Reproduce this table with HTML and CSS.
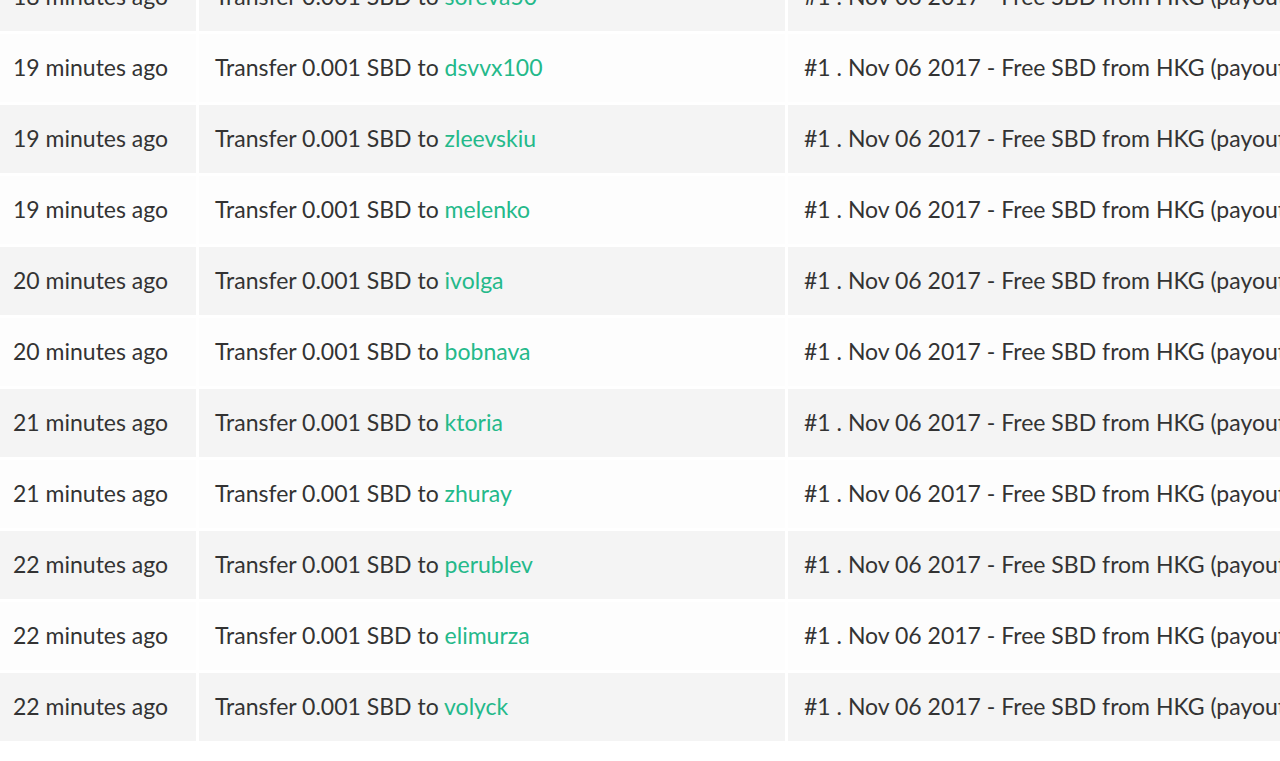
FILE: index.html
```html
<!DOCTYPE html>
<html lang="en">
<head>
<meta charset="utf-8">
<title>Transfers</title>
<link rel="stylesheet" href="styles.css">
</head>
<body>
<table class="history">
  <tbody>
    <tr><td class="time">18 minutes ago</td><td class="op">Transfer 0.001 SBD to <a href="#">soreva50</a></td><td class="memo">#1 . Nov 06 2017 - Free SBD from HKG (payout)</td></tr>
    <tr><td class="time">19 minutes ago</td><td class="op">Transfer 0.001 SBD to <a href="#">dsvvx100</a></td><td class="memo">#1 . Nov 06 2017 - Free SBD from HKG (payout)</td></tr>
    <tr><td class="time">19 minutes ago</td><td class="op">Transfer 0.001 SBD to <a href="#">zleevskiu</a></td><td class="memo">#1 . Nov 06 2017 - Free SBD from HKG (payout)</td></tr>
    <tr><td class="time">19 minutes ago</td><td class="op">Transfer 0.001 SBD to <a href="#">melenko</a></td><td class="memo">#1 . Nov 06 2017 - Free SBD from HKG (payout)</td></tr>
    <tr><td class="time">20 minutes ago</td><td class="op">Transfer 0.001 SBD to <a href="#">ivolga</a></td><td class="memo">#1 . Nov 06 2017 - Free SBD from HKG (payout)</td></tr>
    <tr><td class="time">20 minutes ago</td><td class="op">Transfer 0.001 SBD to <a href="#">bobnava</a></td><td class="memo">#1 . Nov 06 2017 - Free SBD from HKG (payout)</td></tr>
    <tr><td class="time">21 minutes ago</td><td class="op">Transfer 0.001 SBD to <a href="#">ktoria</a></td><td class="memo">#1 . Nov 06 2017 - Free SBD from HKG (payout)</td></tr>
    <tr><td class="time">21 minutes ago</td><td class="op">Transfer 0.001 SBD to <a href="#">zhuray</a></td><td class="memo">#1 . Nov 06 2017 - Free SBD from HKG (payout)</td></tr>
    <tr><td class="time">22 minutes ago</td><td class="op">Transfer 0.001 SBD to <a href="#">perublev</a></td><td class="memo">#1 . Nov 06 2017 - Free SBD from HKG (payout)</td></tr>
    <tr><td class="time">22 minutes ago</td><td class="op">Transfer 0.001 SBD to <a href="#">elimurza</a></td><td class="memo">#1 . Nov 06 2017 - Free SBD from HKG (payout)</td></tr>
    <tr><td class="time">22 minutes ago</td><td class="op">Transfer 0.001 SBD to <a href="#">volyck</a></td><td class="memo">#1 . Nov 06 2017 - Free SBD from HKG (payout)</td></tr>
  </tbody>
</table>
</body>
</html>
```
FILE: styles.css
```css
html, body {
  margin: 0;
  padding: 0;
  background: #ffffff;
  overflow: hidden;
  height: 761px;
}
body {
  font-family: Lato, "Liberation Sans", sans-serif;
  color: #333333;
}
.history {
  border-collapse: separate;
  border-spacing: 3px;
  margin: -40px 0 0 -3px;
  table-layout: fixed;
  width: 1400px;
}
.history td {
  height: 66px;
  padding: 0 0 2px 16px;
  font-size: 23px;
  line-height: 30px;
  white-space: nowrap;
  overflow: hidden;
  vertical-align: middle;
  background: #fdfdfd;
}
.history tr:nth-child(odd) td {
  background: #f4f4f4;
}
.history td.time {
  width: 183px;
  padding-left: 13px;
}
.history td.op {
  width: 570px;
}
.history td.memo {
  width: auto;
}
.history a {
  color: #24b98a;
  text-decoration: none;
}
```
